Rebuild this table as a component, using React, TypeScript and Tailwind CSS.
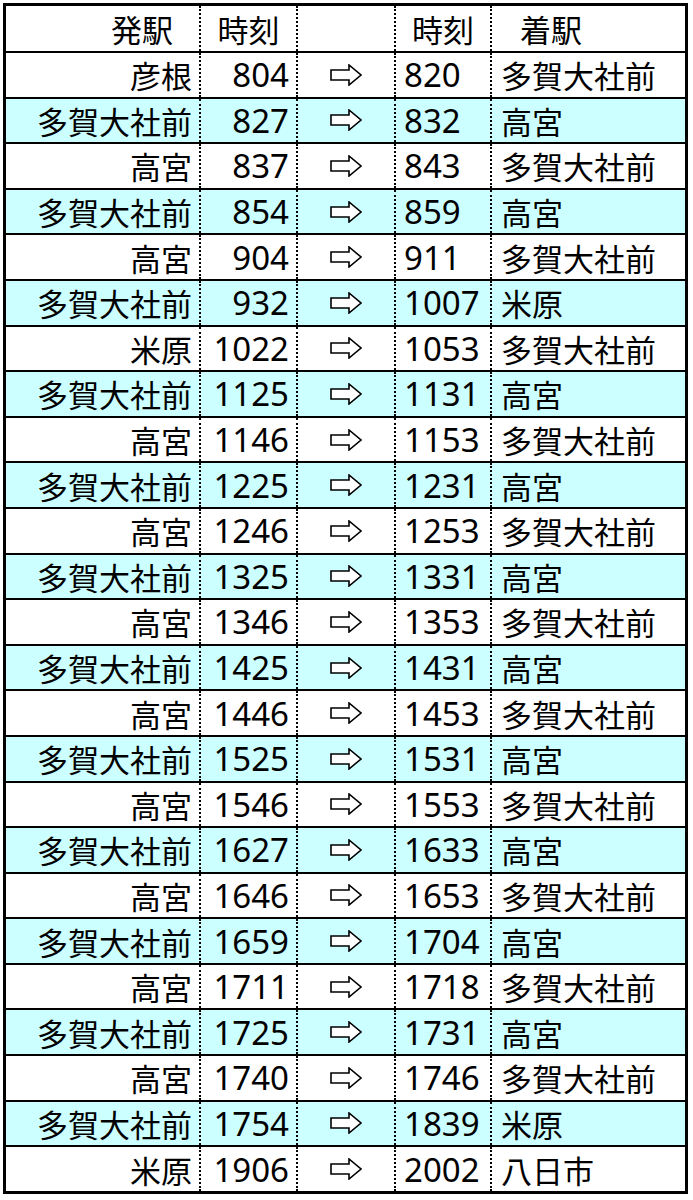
import React from "react";

const rows: [string, string, string, string][] = [
  ["彦根", "804", "820", "多賀大社前"],
  ["多賀大社前", "827", "832", "高宮"],
  ["高宮", "837", "843", "多賀大社前"],
  ["多賀大社前", "854", "859", "高宮"],
  ["高宮", "904", "911", "多賀大社前"],
  ["多賀大社前", "932", "1007", "米原"],
  ["米原", "1022", "1053", "多賀大社前"],
  ["多賀大社前", "1125", "1131", "高宮"],
  ["高宮", "1146", "1153", "多賀大社前"],
  ["多賀大社前", "1225", "1231", "高宮"],
  ["高宮", "1246", "1253", "多賀大社前"],
  ["多賀大社前", "1325", "1331", "高宮"],
  ["高宮", "1346", "1353", "多賀大社前"],
  ["多賀大社前", "1425", "1431", "高宮"],
  ["高宮", "1446", "1453", "多賀大社前"],
  ["多賀大社前", "1525", "1531", "高宮"],
  ["高宮", "1546", "1553", "多賀大社前"],
  ["多賀大社前", "1627", "1633", "高宮"],
  ["高宮", "1646", "1653", "多賀大社前"],
  ["多賀大社前", "1659", "1704", "高宮"],
  ["高宮", "1711", "1718", "多賀大社前"],
  ["多賀大社前", "1725", "1731", "高宮"],
  ["高宮", "1740", "1746", "多賀大社前"],
  ["多賀大社前", "1754", "1839", "米原"],
  ["米原", "1906", "2002", "八日市"],
];

const Arrow = () => (
  <svg width="32" height="22" viewBox="0 0 32 22" fill="none">
    <path
      d="M1 6 H19 V1 L31 11 L19 21 V16 H1 Z"
      fill="white"
      stroke="black"
      strokeWidth="1.6"
      strokeLinejoin="miter"
    />
  </svg>
);

const jp = "font-['Noto_Sans_CJK_JP',sans-serif] text-[31px]";
const num = "font-['Noto_Sans','Noto_Sans_CJK_JP',sans-serif] text-[33px]";
const cell = "h-full flex items-center border-r-[2px] border-dotted border-black";

export default function App() {
  return (
    <div className="bg-white w-[693px] h-[1200px] pt-[3px] pl-[3px]">
      <div className="w-[685px] border-[3px] border-black text-black leading-none">
        {/* header */}
        <div className="flex h-[45px]">
          <div className={`${cell} w-[195px] justify-end pr-[26px] ${jp}`}>発駅</div>
          <div className={`${cell} w-[97px] justify-center ${jp}`}>時刻</div>
          <div className={`${cell} w-[98px]`} />
          <div className={`${cell} w-[96px] justify-center ${jp}`}>時刻</div>
          <div className={`h-full flex items-center w-[193px] pl-[28px] ${jp}`}>着駅</div>
        </div>
        {rows.map((r, i) => (
          <div
            key={i}
            className={`flex h-[45.6px] border-t-[2px] border-black ${
              i % 2 === 1 ? "bg-[#ccffff]" : "bg-white"
            }`}
          >
            <div className={`${cell} w-[195px] justify-end pr-[7px] ${jp}`}>{r[0]}</div>
            <div className={`${cell} w-[97px] justify-end pr-[7px] ${num}`}>{r[1]}</div>
            <div className={`${cell} w-[98px] justify-center`}>
              <Arrow />
            </div>
            <div className={`${cell} w-[96px] pl-[8px] ${num}`}>{r[2]}</div>
            <div className={`h-full flex items-center w-[193px] pl-[9px] ${jp}`}>{r[3]}</div>
          </div>
        ))}
      </div>
    </div>
  );
}
